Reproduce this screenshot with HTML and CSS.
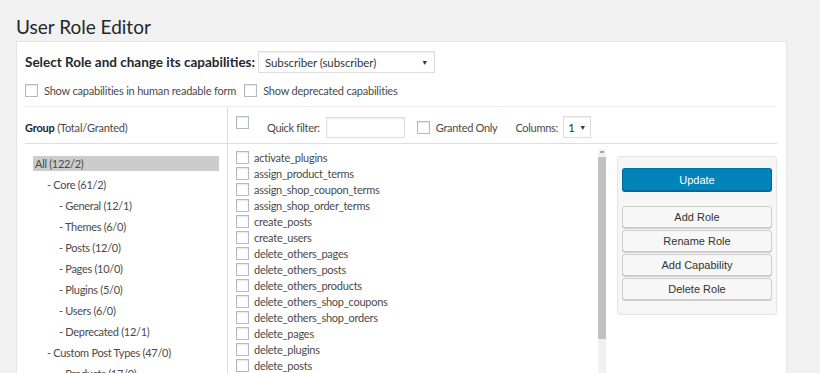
FILE: index.html
```html
<!DOCTYPE html>
<html lang="en">
<head>
    <meta charset="UTF-8">
    <meta name="viewport" content="width=device-width, initial-scale=1.0">
    <title>User Role Editor</title>
    <link rel="stylesheet" href="styles.css">
</head>
<body>
    <h1 class="page-title">User Role Editor</h1>

    <div class="editor">
        <div class="role-row">
            <span class="role-label">Select Role and change its capabilities:</span>
            <div class="select role-select"><span>Subscriber (subscriber)</span><span class="caret">▼</span></div>
        </div>

        <div class="options-row">
            <label class="check"><input type="checkbox"> Show capabilities in human readable form</label>
            <label class="check"><input type="checkbox"> Show deprecated capabilities</label>
        </div>

        <div class="grid">
            <div class="groups-head"><strong>Group</strong>&nbsp;(Total/Granted)</div>
            <div class="caps-head">
                <input type="checkbox" class="all-check">
                <span class="filter-label">Quick filter:</span>
                <input type="text" class="filter-input">
                <label class="check granted"><input type="checkbox"> Granted Only</label>
                <span class="cols-label">Columns:</span>
                <div class="select cols-select"><span>1</span><span class="caret">▼</span></div>
            </div>

            <ul class="groups">
                <li class="active">All (122/2)</li>
                <li class="lvl1">- Core (61/2)</li>
                <li class="lvl2">- General (12/1)</li>
                <li class="lvl2">- Themes (6/0)</li>
                <li class="lvl2">- Posts (12/0)</li>
                <li class="lvl2">- Pages (10/0)</li>
                <li class="lvl2">- Plugins (5/0)</li>
                <li class="lvl2">- Users (6/0)</li>
                <li class="lvl2">- Deprecated (12/1)</li>
                <li class="lvl1">- Custom Post Types (47/0)</li>
                <li class="lvl2">- Products (17/0)</li>
            </ul>

            <div class="caps-area">
                <ul class="caps">
                    <li><input type="checkbox"> activate_plugins</li>
                    <li><input type="checkbox"> assign_product_terms</li>
                    <li><input type="checkbox"> assign_shop_coupon_terms</li>
                    <li><input type="checkbox"> assign_shop_order_terms</li>
                    <li><input type="checkbox"> create_posts</li>
                    <li><input type="checkbox"> create_users</li>
                    <li><input type="checkbox"> delete_others_pages</li>
                    <li><input type="checkbox"> delete_others_posts</li>
                    <li><input type="checkbox"> delete_others_products</li>
                    <li><input type="checkbox"> delete_others_shop_coupons</li>
                    <li><input type="checkbox"> delete_others_shop_orders</li>
                    <li><input type="checkbox"> delete_pages</li>
                    <li><input type="checkbox"> delete_plugins</li>
                    <li><input type="checkbox"> delete_posts</li>
                </ul>

                <div class="scrollbar">
                    <span class="scroll-arrow"></span>
                    <span class="scroll-thumb"></span>
                </div>

                <div class="actions">
                    <button class="btn primary">Update</button>
                    <div class="btn-stack">
                        <button class="btn">Add Role</button>
                        <button class="btn">Rename Role</button>
                        <button class="btn">Add Capability</button>
                        <button class="btn">Delete Role</button>
                    </div>
                </div>
            </div>
        </div>
    </div>
</body>
</html>
```

FILE: styles.css
```css
html, body { height: 373px; overflow: hidden; }
body { margin: 0; background: #f1f1f1; font-family: 'Lato', 'Open Sans', sans-serif; font-size: 11px; letter-spacing: -0.2px; color: #444; }
ul { list-style: none; margin: 0; padding: 0; }

.page-title { margin: 12px 0 0 16px; font-size: 19px; line-height: 29px; font-weight: 400; letter-spacing: 0; color: #23282d; }

.editor { margin: 0 33px 0 16px; padding: 9px 10px 0 8px; background: #fff; border: 1px solid #e5e5e5; box-shadow: 0 1px 1px rgba(0,0,0,0.04); height: 400px; }

.role-row { display: flex; align-items: center; gap: 3px; }
.role-label { font-size: 13.5px; font-weight: 700; letter-spacing: 0; color: #23282d; }
.select { display: flex; align-items: center; justify-content: space-between; box-sizing: border-box; height: 22px; border: 1px solid #ddd; box-shadow: inset 0 1px 2px rgba(0,0,0,0.07); padding: 0 6px; color: #32373c; background: #fff; }
.role-select { width: 177px; font-size: 11.5px; letter-spacing: -0.1px; }
.caret { font-size: 7px; color: #333; }

.options-row { display: flex; gap: 8px; margin-top: 11px; padding-bottom: 9px; border-bottom: 1px solid #eee; }
.check { display: flex; align-items: center; gap: 6px; color: #4a4a4a; }

input[type=checkbox] { appearance: none; -webkit-appearance: none; margin: 0; width: 13px; height: 13px; flex: none; border: 1px solid #b4b9be; background: #fff; box-shadow: inset 0 1px 2px rgba(0,0,0,0.1); }

.grid { display: grid; grid-template-columns: 203px 1fr; }
.groups-head { height: 37px; display: flex; align-items: center; padding-top: 5px; box-sizing: border-box; border-right: 1px solid #ddd; border-bottom: 1px solid #ddd; color: #4a4a4a; }
.groups-head strong { color: #23282d; }
.caps-head { height: 37px; box-sizing: border-box; display: flex; align-items: center; padding: 4px 0 0 8px; border-bottom: 1px solid #ddd; color: #4a4a4a; letter-spacing: -0.3px; }
.all-check { margin-bottom: 10px !important; }
.filter-label { margin-left: 18px; }
.filter-input { box-sizing: border-box; width: 79px; height: 21px; margin: 0 0 0 6px; border: 1px solid #ddd; box-shadow: inset 0 1px 2px rgba(0,0,0,0.07); }
.granted { margin-left: 12px; }
.cols-label { margin-left: 18px; }
.cols-select { width: 28px; height: 22px; margin-left: 5px; padding: 0 4px; font-size: 12px; }

.groups { border-right: 1px solid #ddd; padding: 12px 8px 0 8px; }
.groups li { line-height: 15px; padding-left: 2px; margin-bottom: 6px; font-size: 11px; letter-spacing: -0.3px; color: #4a4a4a; }
.groups li.active { background: #ccc; }
.groups li.lvl1 { padding-left: 14px; }
.groups li.lvl2 { padding-left: 26px; }

.caps-area { display: flex; align-items: flex-start; }
.caps { width: 362px; padding: 5px 0 0 8px; }
.caps li { display: flex; align-items: center; gap: 5px; height: 16px; color: #4a4a4a; letter-spacing: -0.25px; }

.scrollbar { display: flex; flex-direction: column; width: 8px; height: 260px; margin-top: 5px; background: #f1f1f1; }
.scroll-arrow { height: 8px; background: linear-gradient(#f1f1f1 2px, #a6a6a6 2px, #a6a6a6 4px, #f1f1f1 4px); margin: 0 2px; }
.scroll-thumb { height: 182px; background: #c1c1c1; }

.actions { width: 160px; box-sizing: border-box; margin: 12px 0 0 11px; padding: 11px 4px 14px; background: #f6f6f6; border: 1px solid #e5e5e5; border-radius: 3px; }
.btn { display: block; width: 100%; height: 22px; margin: 0; padding: 0; font-family: 'Liberation Sans', Arial, sans-serif; font-size: 11px; letter-spacing: 0; color: #333; background: #f7f7f7; border: 1px solid #ccc; border-radius: 3px; box-shadow: 0 1px 0 #ccc; }
.btn.primary { height: 23px; color: #fff; background: #0085ba; border-color: #0073aa #006799 #006799; box-shadow: 0 1px 0 #006799; }
.btn-stack { display: flex; flex-direction: column; gap: 2px; margin-top: 15px; }
```
